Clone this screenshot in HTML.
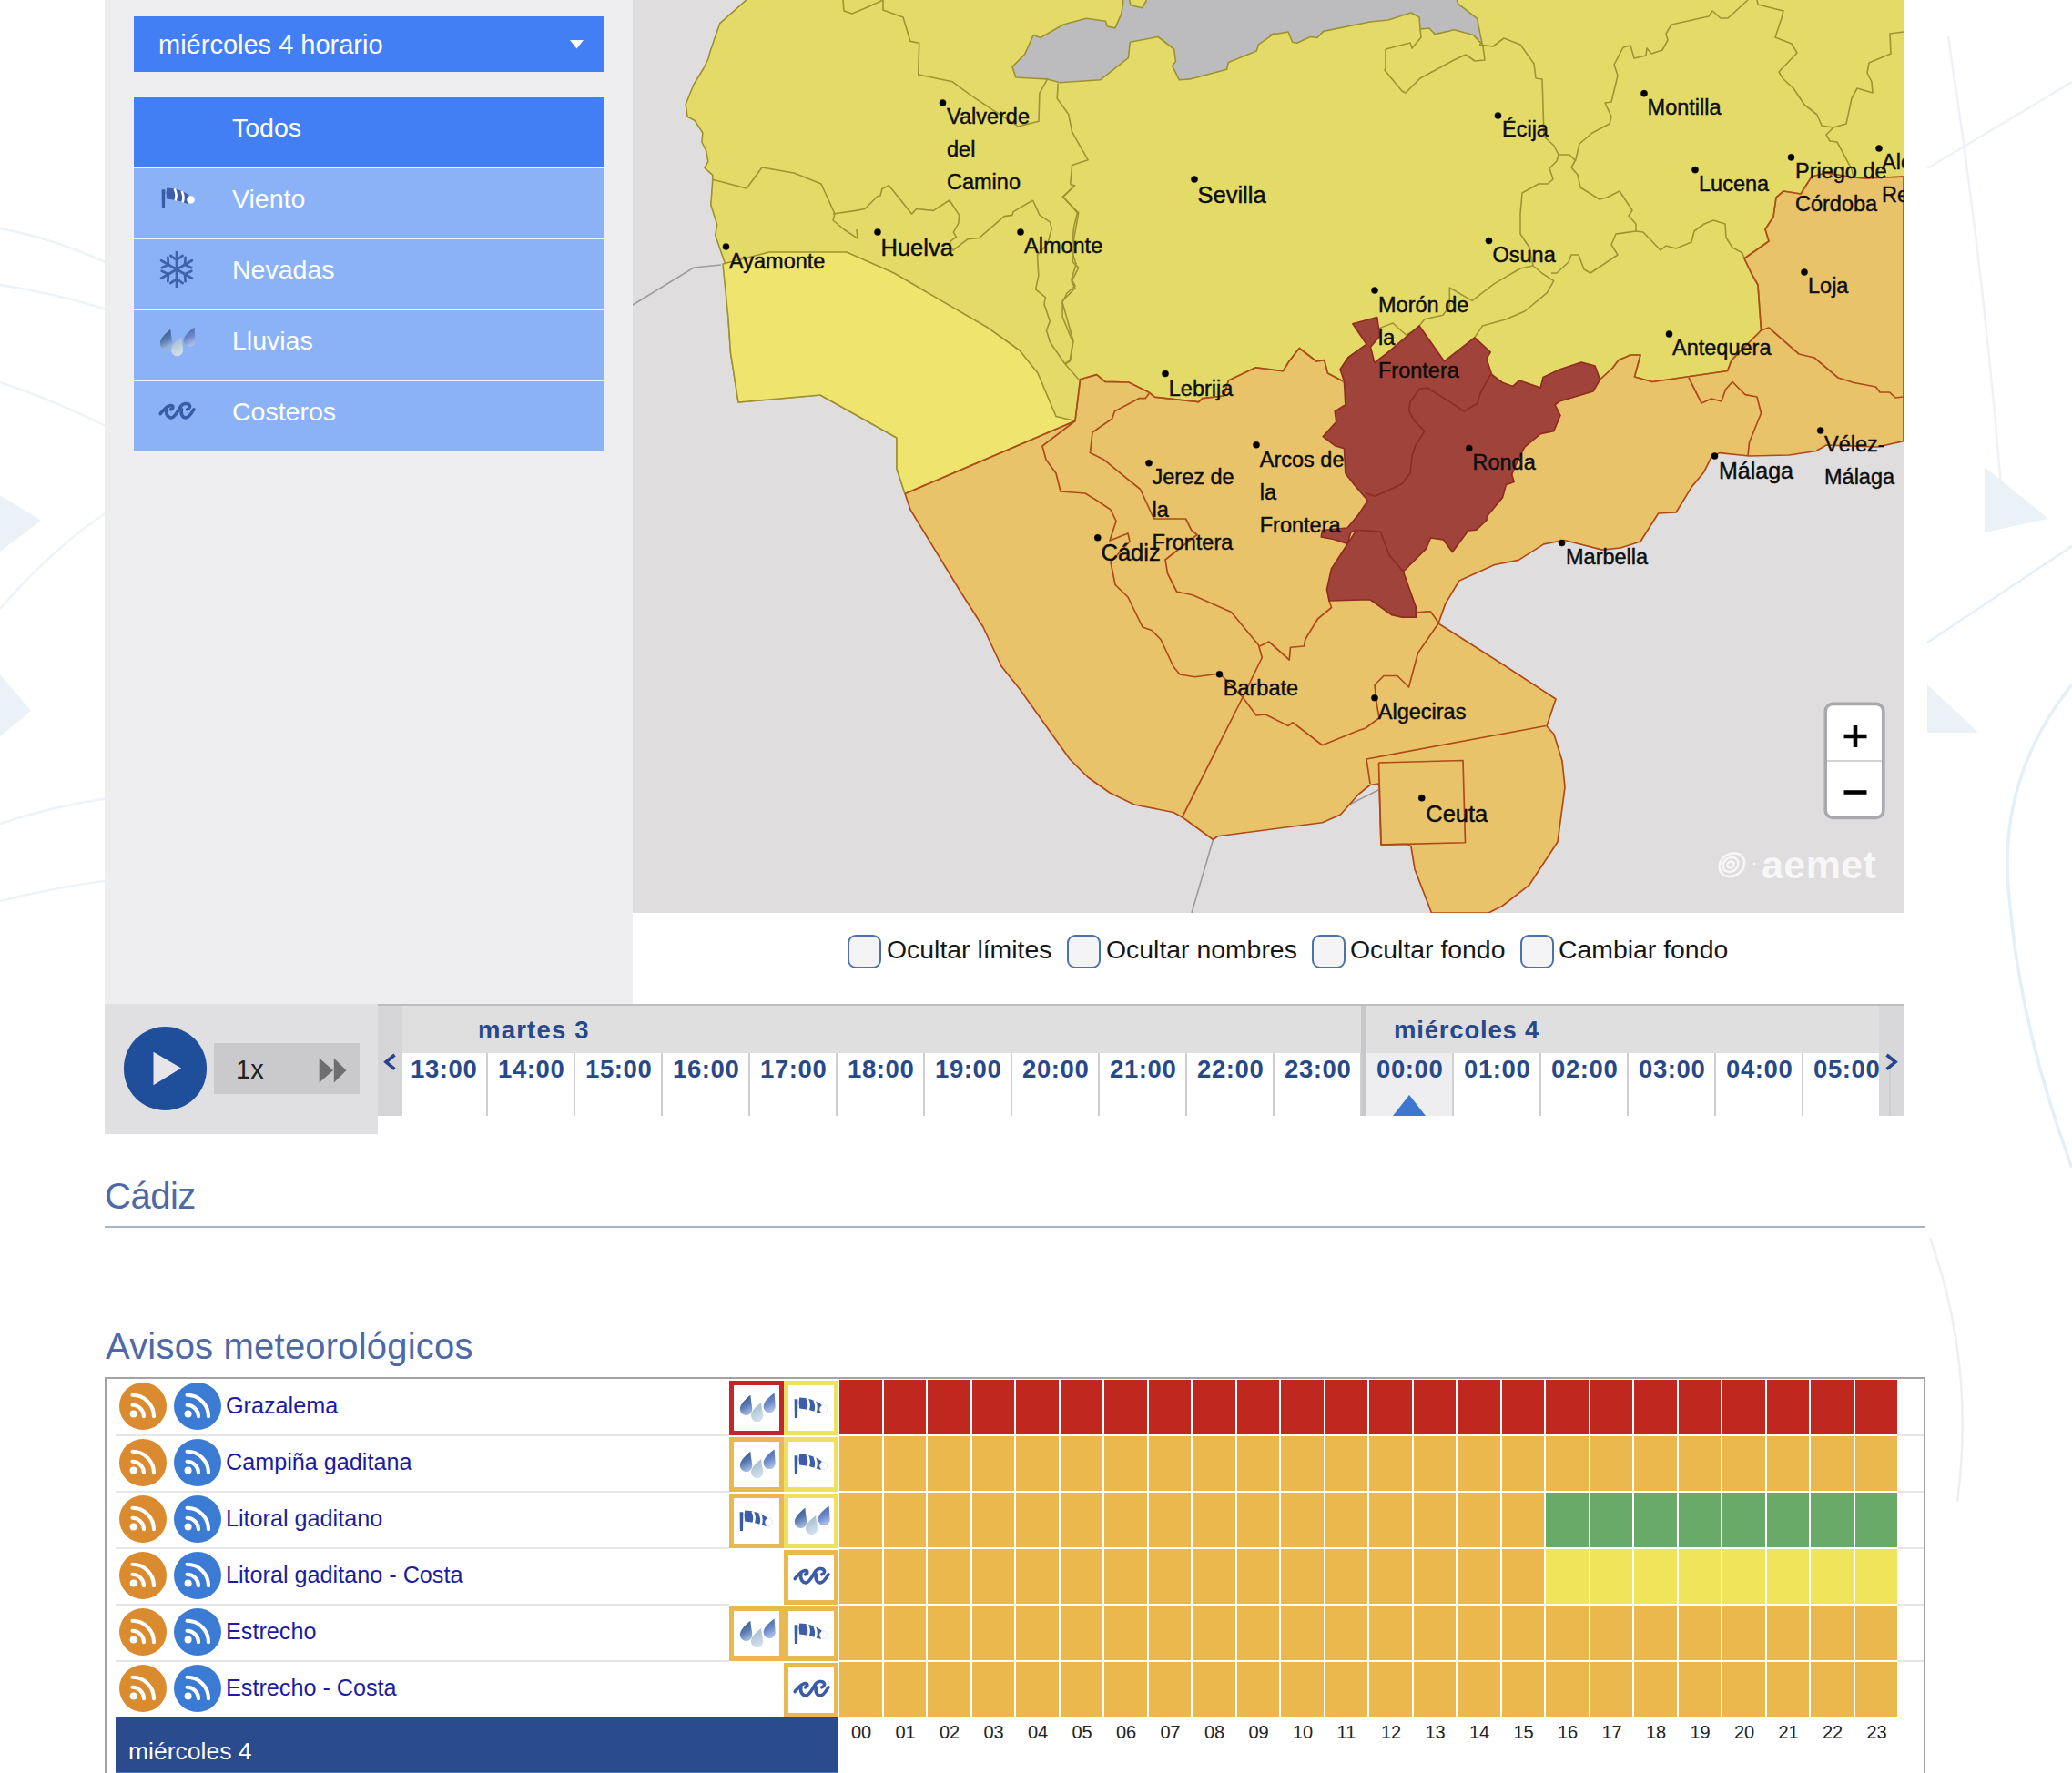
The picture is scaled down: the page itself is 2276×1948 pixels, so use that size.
<!DOCTYPE html>
<html><head><meta charset="utf-8">
<style>
*{box-sizing:border-box;margin:0;padding:0}
html,body{width:2276px;height:1948px;overflow:hidden;background:#fff;font-family:"Liberation Sans",sans-serif}
.a{position:absolute}
#side{left:115px;top:0;width:580px;height:1103px;background:#EEEEF0}
.dd{left:147px;top:18px;width:516px;height:61px;background:#427FF5;color:#fff;font-size:29px}
.mi{left:147px;width:516px;height:76px;background:#8BB2F7;color:#fff;font-size:28.5px}
.mi span{position:absolute;left:108px;top:17px}
#map{left:695px;top:0;width:1396px;height:1003px;background:#DFDDDE;overflow:hidden}
.cb{top:1027px;width:37px;height:37px;border:2.5px solid #4A72B0;border-radius:9px;background:#F4F4F6}
.cbt{top:1027px;font-size:28.4px;color:#161616}
.hr{top:1157px;width:96px;height:69px;border-right:2px solid #CFCFD1;}
.hr span{position:absolute;left:11px;top:2px;font-size:27.5px;font-weight:bold;color:#27498A;letter-spacing:0.6px}
.rss{width:52px;height:52px;border-radius:50%}
.nm{left:248px;font-size:25.2px;color:#1C1CA0}
.cell{width:46.5px;height:60px}
.hl{top:1891.5px;font-size:20px;color:#222}
</style></head><body>
<svg width="0" height="0" style="position:absolute">
<defs>
<linearGradient id="g1" x1="0" y1="0" x2="0.3" y2="1"><stop offset="0" stop-color="#2F4F8F"/><stop offset="0.6" stop-color="#5878B0"/><stop offset="1" stop-color="#9AB4D8"/></linearGradient>
<linearGradient id="g2" x1="0" y1="0" x2="0.3" y2="1"><stop offset="0" stop-color="#9EB4C8"/><stop offset="1" stop-color="#D0DEEA"/></linearGradient>
<linearGradient id="g3" x1="0" y1="0" x2="0.3" y2="1"><stop offset="0" stop-color="#3F5FA8"/><stop offset="0.6" stop-color="#6C88C8"/><stop offset="1" stop-color="#A8BCE8"/></linearGradient>
<symbol id="rain" viewBox="0 0 60 60">
<path d="M23.4,15.7 C17.26,20.479999999999997 11.565000000000001,26.509999999999998 11.900000000000002,31.2 A6.7,6.7 0 0 0 25.3,31.2 C24.965000000000003,25.84 24.0,23.74 23.4,15.7 Z" fill="url(#g1)"/>
<path d="M35.2,23.9 C29.28,28.04 23.67,33.980000000000004 24.0,38.6 A6.6,6.6 0 0 0 37.2,38.6 C36.870000000000005,33.32 35.800000000000004,31.819999999999997 35.2,23.9 Z" fill="url(#g2)"/>
<path d="M49.6,13.5 C42.900000000000006,18.200000000000003 37.375,24.05 37.7,28.6 A6.5,6.5 0 0 0 50.7,28.6 C50.375,23.400000000000002 50.2,21.3 49.6,13.5 Z" fill="url(#g3)"/>
</symbol>
<symbol id="wind" viewBox="0 0 60 60">
<path d="M11.6,20.2 L15.4,20.2 L15.0,41 L11.9,41 Z" fill="#3A5CA6"/>
<path d="M17.2,18.6 Q30,18.8 41.5,26.2 L40.5,36 Q28,31.5 17.2,30.6 Q15.8,24.5 17.2,18.6 Z" fill="#3D5DA8"/>
<path d="M25.6,19.4 Q29,26 26.6,32.4 M33.6,22 Q37,28.5 34.4,34.2" fill="none" stroke="#fff" stroke-width="2.6"/>
<circle cx="43.6" cy="31.4" r="4.2" fill="#fff" stroke="#D3DDF2" stroke-width="0.7"/>
</symbol>
<symbol id="wave" viewBox="0 0 60 60">
<g fill="none" stroke="#3A5CA6" stroke-width="3.6" stroke-linecap="round">
<path d="M12.2,31.6 C15.5,27.6 19,22.5 23.7,22.5 C26.5,22.5 26.5,25.7 23.7,26.8"/>
<path d="M18.9,26.8 C17.4,32.4 21.3,36.3 24.5,35.9 C28.4,35.5 31.2,28.4 35.1,22.9 C37.1,20.5 41.1,19.7 43.4,21.3 C45.4,22.9 44.6,26.1 41.8,26.8"/>
<path d="M35.5,26.8 C34,32.4 37.1,36.3 40.3,35.9 C44.2,35.5 46.2,30.8 49,26.8"/>
</g>
</symbol>
<symbol id="snow" viewBox="0 0 40 40"><g stroke="#3F62AC" stroke-width="2.7" stroke-linecap="round" fill="none"><path d="M20,20 L20.00,0.50 M20.00,9.60 L26.64,4.95 M20.00,9.60 L13.36,4.95 M20,20 L36.89,10.25 M29.01,14.80 L36.35,18.22 M29.01,14.80 L29.71,6.73 M20,20 L36.89,29.75 M29.01,25.20 L29.71,33.27 M29.01,25.20 L36.35,21.78 M20,20 L20.00,39.50 M20.00,30.40 L13.36,35.05 M20.00,30.40 L26.64,35.05 M20,20 L3.11,29.75 M10.99,25.20 L3.65,21.78 M10.99,25.20 L10.29,33.27 M20,20 L3.11,10.25 M10.99,14.80 L10.29,6.73 M10.99,14.80 L3.65,18.22"/></g></symbol>
<symbol id="rss" viewBox="0 0 52 52">
<circle cx="15.6" cy="34.6" r="4" fill="#fff"/>
<path d="M14.5,24.8 A12.5,12.5 0 0 1 27,37.3 M14.5,13.8 A23.5,23.5 0 0 1 38,37.3" fill="none" stroke="#fff" stroke-width="4.1" stroke-linecap="round"/>
</symbol>
</defs></svg>
<svg class="a" style="left:0;top:0" width="2276" height="1948">
<g fill="none" stroke="#EDF3F7" stroke-width="2.5">
<path d="M0,251 Q60,262 120,290"/>
<path d="M0,313 Q60,322 120,341"/>
<path d="M0,669 Q60,600 120,561"/>
<path d="M0,905 Q60,885 120,877"/>
<path d="M0,990 Q60,975 120,967"/>
<path d="M0,420 Q60,440 120,470"/>
<path d="M2276,752 Q2190,860 2208,995 Q2220,1131 2276,1283" stroke="#E3F0F5" stroke-width="3.5"/>
<path d="M2117,706 L2276,600" stroke="#E6EFF5"/>
<path d="M2117,185 L2276,90" stroke="#EEF2F6"/>
<path d="M2140,40 Q2180,300 2200,560" stroke="#EEF2F6"/>
<path d="M2120,1360 Q2170,1500 2150,1650" stroke="#EFEFF2"/>
</g>
<g fill="#EAF2F8">
<path d="M0,544 L45,572 L0,606 Z"/>
<path d="M0,741 L34,781 L0,809 Z"/>
<path d="M2117,752 L2173,805 L2117,805 Z"/>
<path d="M2180,513 L2250,570 L2180,585 Z" fill="#EAF1F7"/>
</g>
</svg>
<div class="a" style="left:115px;top:0;width:2001px;height:1948px;background:#fff"></div>
<div class="a" id="side"></div>
<div class="a dd"><span class="a" style="left:27px;top:15px">miércoles 4 horario</span>
<svg class="a" style="left:479px;top:26px" width="16" height="10"><path d="M0 0 L15 0 L7.5 9.5 Z" fill="#fff"/></svg></div>
<div class="a" style="left:145.5px;top:105px;width:518.5px;height:391.5px;background:#EAF4FF"></div>
<div class="a mi" style="top:107px;background:#427FF5"><span>Todos</span></div>
<div class="a mi" style="top:185px"><span>Viento</span></div>
<div class="a mi" style="top:263px"><span>Nevadas</span></div>
<div class="a mi" style="top:341px"><span>Lluvias</span></div>
<div class="a mi" style="top:419px"><span>Costeros</span></div>
<svg class="a" style="left:165.7px;top:187.8px" width="60" height="60"><use href="#wind"/></svg><svg class="a" style="left:174.4px;top:276px" width="40" height="40"><use href="#snow"/></svg><svg class="a" style="left:164px;top:345.5px" width="60" height="60"><use href="#rain"/></svg><svg class="a" style="left:163.8px;top:423.3px" width="60" height="60"><use href="#wave"/></svg>

<div class="a" id="map"><svg class="a" style="left:0;top:0" width="1396" height="1003" viewBox="695 0 1396 1003">
<rect x="695" y="0" width="1396" height="1003" fill="#DFDDDE"/>
<polyline points="695,335 762,294 792,291" fill="none" stroke="#9C9C9E" stroke-width="1.6"/>
<polyline points="1332.5,922.5 1309,1003" fill="none" stroke="#9C9C9E" stroke-width="1.6"/>
<polyline points="1515,867.5 1480,885" fill="none" stroke="#9C9C9E" stroke-width="1.6"/>
<polygon points="994,542 1000,560 1055,650 1080,689 1100,732 1120,757 1175,834 1195,854 1219,871 1246,884 1289,892.5 1300,898.75 1332.5,922.5 1337.5,918.75 1452.5,903.75 1472.5,895 1492.5,872.5 1505,862.5 1515,861 1517,928 1546,927.5 1550,930 1554,955 1572.5,1003 1635,1003 1650,995.5 1679.5,972.7 1711,925 1719,865 1716,836 1707,806.8 1699,797.7 1709,768 1650,729.5 1580,685 1587.8,663.1 1602.9,638 1641.8,620.5 1668.1,615.4 1695.7,597.9 1718.3,593.5 1760,604.1 1780,602 1802,595 1821.6,564 1841,563 1858.5,534.6 1871.5,519 1880,502 1889,497.6 1921.5,501 1965,500 1995,495.5 2006,489 2062.6,491 2091,484.6 2091,190 1900,190 1900,380 1180,380" fill="#E8C36A" stroke="#B04A18" stroke-width="1.7" stroke-linejoin="round"/>
<polygon points="822,-2 797.6,19.7 790.7,25.7 779.8,57.2 777.8,65 772.9,75 762,92.8 753.2,114.5 755.1,128.3 763,132.2 771.9,146 770.9,156 775.8,165.8 777.8,177.6 773.9,184.5 782.8,192.4 782.8,197.4 780.8,225 787.7,246.7 785.7,258.5 796.6,290 800,350 802.5,387.5 811,442 901,434 985,481 985,515 994,542.5 1181,462.5 1186.5,416.8 1204.7,411.6 1213.9,419.4 1239.9,420 1262.1,431.1 1268.6,436.3 1316.8,441.6 1320.7,437.6 1344.2,435 1349.4,418.1 1379.3,403.8 1409.3,407.7 1415.8,397.2 1427.2,382.5 1446.1,397 1454.7,395.6 1458.4,410 1475,418.7 1500,450 1650,450 1757.5,417 1771.6,404 1778,395.6 1791,390 1802,390 1795.5,414 1815,419.5 1897.6,407.5 1902,395.6 1934.5,363 1931,313 1923.6,300 1916,284 1943,265 1939,252 1948,238 1951,217 1959,210 1978,213 1990,194 2006,190 2036,195 2049,196 2069,195 2092,194 2092,-2" fill="#E4DA67" stroke="#9E9130" stroke-width="1.6" stroke-linejoin="round"/>
<polygon points="794,290 845,277 930,277 982,300 1085,360 1120,385 1140,410 1160,457.5 1181,462.5 994,542.5 985,515 985,481 901,434 811,442 802.5,387.5 800,350" fill="#EEE46E" stroke="#9E9130" stroke-width="1.6" stroke-linejoin="round"/>
<polygon points="1112,73.4 1115.8,85 1133.2,86 1150.6,86.9 1164,90.7 1208.5,87.8 1239.4,63.7 1241.3,46.3 1272.2,40.5 1289.6,54 1291.5,67.6 1287.6,72.4 1295.4,87.8 1307,86.9 1347.5,76.3 1349.4,68.5 1380.3,56 1382.2,49.2 1400,36.7 1394.8,38.6 1415,35 1419.6,46.3 1424.7,47.3 1439.2,40.5 1446.9,41.5 1453.7,34.4 1505,24 1525,22 1550,14 1559,19 1560,32 1570,31 1576.2,37.6 1597.4,32.8 1618.6,38.6 1628.3,49.2 1622.5,20.3 1601.4,3.9 1600,-2 1260.6,-2 1254.8,8.7 1242,5.8 1240.3,-2 1233.6,-2 1233.6,3.9 1231.7,15.4 1224.9,30.9 1216.2,29 1214.3,23.2 1193,20.3 1168,27 1142.9,41.5 1135.1,38.6 1125.5,59.8" fill="#BCBCBF" stroke="#9E9130" stroke-width="1.6" stroke-linejoin="round"/>
<polyline points="926,0 927,12 936,15 955,7 970,0" fill="none" stroke="#A09332" stroke-width="1.6" stroke-linejoin="round"/>
<polyline points="970,0 970,11 992,19 1000,45.4 1009.7,47.3 1008.7,82 1046.3,89.8 1065.6,104.2 1088.8,119.7 1115.8,137 1117.8,139 1141,133.2 1141.9,102.3 1150.6,86.9" fill="none" stroke="#A09332" stroke-width="1.6" stroke-linejoin="round"/>
<polyline points="1162.2,91.7 1161.2,108.1 1173.7,125.5 1177.6,144.8 1195,175.7 1177.6,181.5 1175.7,202.7 1180.5,203.7 1168,216.2 1183.4,233.6 1179.5,250 1177,275 1182,290 1177,307 1181,314 1172,322 1167,332 1179,375 1175,397 1170,400 1185,417" fill="none" stroke="#A09332" stroke-width="1.6" stroke-linejoin="round"/>
<polyline points="1134.5,220 1142,236.4 1153.3,243.9 1155.2,251.4 1150.8,267.8 1139.5,280.3 1140.8,302.9 1137.6,317.9 1148.3,326.7 1147,334.3 1153.3,353.1 1149.5,363.1 1153.3,375.7 1169.6,399.5 1175.9,395.7 1178.4,375.7 1167.1,348.1 1167.1,330.5 1180.9,316.7 1177.1,309.2 1184.7,294.1 1178.4,287.8 1179.6,262.7 1184.7,233.9 1167.1,216.3 1180.9,203.8" fill="none" stroke="#A09332" stroke-width="1.6" stroke-linejoin="round"/>
<polyline points="1046.6,275.3 1063,262.7 1075.5,261.5 1103.1,237.6 1111.9,236.4 1113.1,232.6 1134.5,220" fill="none" stroke="#A09332" stroke-width="1.6" stroke-linejoin="round"/>
<polyline points="915,235 940,231.4 950,229.5 963.8,215.7 967,215 968.9,207.5 976.4,203.8 1001.5,235.1 1006.5,229.5 1025.3,231.4 1042.9,220 1053.6,236.4 1052.9,245.2 1047.3,255.2 1050.4,260.2 1044.1,265.2 1042.9,270.3 1046.6,274 1046.6,275.3" fill="none" stroke="#A09332" stroke-width="1.6" stroke-linejoin="round"/>
<polyline points="782,197 820,207 829,195 837,184 872,190 902,202 917,235 915,242 927,252 942,262 941,252" fill="none" stroke="#A09332" stroke-width="1.6" stroke-linejoin="round"/>
<polyline points="1522,54 1549,47 1551,53 1561,41 1560,32" fill="none" stroke="#A09332" stroke-width="1.6" stroke-linejoin="round"/>
<polyline points="1522,54 1522,75 1521,77 1540,100 1544,102 1560,86 1597,66 1610,60 1620,67 1631,66 1629,51 1625,49" fill="none" stroke="#A09332" stroke-width="1.6" stroke-linejoin="round"/>
<polyline points="1625,49 1640,51 1652,42 1670,49 1685,70 1687,86 1694,87 1695,117 1696,150 1707,160 1712,170 1710,177 1702,185 1706,197 1700,202 1690,202 1672,212 1670,235 1670,257 1680,272 1684,292 1670,295 1641.5,311.6 1617,330.4 1592.3,316 1592.3,336.2 1585,346.3 1564.8,350.7 1559,357.9" fill="none" stroke="#A09332" stroke-width="1.6" stroke-linejoin="round"/>
<polyline points="1514,361 1530,355 1544.5,368 1552,364" fill="none" stroke="#A09332" stroke-width="1.6" stroke-linejoin="round"/>
<polyline points="1684,292 1693.6,300 1706.7,308.7 1699.4,321.7 1674.8,342 1654.5,350.7 1628.5,357.9 1619.8,370.9" fill="none" stroke="#A09332" stroke-width="1.6" stroke-linejoin="round"/>
<polyline points="1920,0 1898,20 1890,20 1881,12 1877,18 1836,27 1830,37 1832,44 1826,55 1814,59 1809,53 1808,61 1795,64 1791,50 1783,52 1773,71 1777,83 1770,112 1763,113 1770,128 1768,136 1749,146 1735,158 1731,175 1726,184 1733,192 1736,206 1757,219 1765,217 1779,210 1793,231 1789,237 1797,246 1797,254 1805,255 1824,275 1830,270 1841,273 1858,266 1861,254 1872,246 1882,242 1895,246 1896,261 1903,272 1914,278 1916,284" fill="none" stroke="#A09332" stroke-width="1.6" stroke-linejoin="round"/>
<polyline points="1712,170 1724,170 1731,177" fill="none" stroke="#A09332" stroke-width="1.6" stroke-linejoin="round"/>
<polyline points="1797,254 1775,257 1770,269 1777,280 1747,300 1740,296 1734,280 1726,280 1723,288 1710,300 1704,300" fill="none" stroke="#A09332" stroke-width="1.6" stroke-linejoin="round"/>
<polyline points="1930,0 1931,5 1959,12 1957,20 1950,41 1968,48 1974,58 1954,79 1959,87 1970,97 1982,115 1996,126 2001,138 2014,140 2028,136 2034,108 2040,97 2057,102 2056,90 2051,80 2053,69 2077,59 2076,37 2091,35" fill="none" stroke="#A09332" stroke-width="1.6" stroke-linejoin="round"/>
<polyline points="2014,140 2006,148 2010,155 2018,156 2034,186 2036,195" fill="none" stroke="#A09332" stroke-width="1.6" stroke-linejoin="round"/>
<polyline points="1181,462.5 1145,490 1149,505 1160,520 1165,540 1192,542 1205,550 1220,560 1226,572.5 1219,594 1239,586 1241,595 1220,617.5 1225,642.5 1239,656 1255,689 1265,692.5 1275,702.5 1289,732.5 1296,741 1312.5,743.75 1340,740 1365,766" fill="none" stroke="#B04A18" stroke-width="1.7" stroke-linejoin="round"/>
<polyline points="1262.1,432.4 1258.2,437.6 1251.6,437.6 1224.3,452 1221.7,460 1200,475 1197.5,497.5 1212.5,505 1240,527.5 1252.5,537.5 1267.5,570 1287.5,570 1302.5,570 1308.75,582.5 1315,587.5 1280,615 1282.5,630 1292.5,650 1310,653.75 1352.5,672.5 1382.5,708.75 1386.25,722.5 1365,766.25 1298.75,897.5" fill="none" stroke="#B04A18" stroke-width="1.7" stroke-linejoin="round"/>
<polyline points="1365,766 1380,786 1390,785 1415,797.5 1420,793.75 1452.5,818.75 1492.5,802.5 1500,800 1515,788.75 1512.5,775 1510,752.5 1520,742.5 1535,742.5 1547.5,755 1557.5,717.5 1580,685" fill="none" stroke="#B04A18" stroke-width="1.7" stroke-linejoin="round"/>
<polyline points="1383.75,710 1393.75,705 1416.25,725 1417.5,711.25 1432.5,710 1433.75,702.5 1447.5,680 1462.5,667.5 1460,660" fill="none" stroke="#B04A18" stroke-width="1.7" stroke-linejoin="round"/>
<polyline points="1555.2,673.1 1567.8,671.9 1571.5,671.9 1580.3,684.4" fill="none" stroke="#B04A18" stroke-width="1.7" stroke-linejoin="round"/>
<polyline points="1501,834 1698,797.5" fill="none" stroke="#B04A18" stroke-width="1.7" stroke-linejoin="round"/>
<polyline points="1501,834 1505,861" fill="none" stroke="#B04A18" stroke-width="1.7" stroke-linejoin="round"/>
<polyline points="1514.5,838 1607,835.5 1609.5,925.75 1517,928 1514.5,838" fill="none" stroke="#B04A18" stroke-width="1.7" stroke-linejoin="round"/>
<polyline points="1855,415 1869,443 1880,438 1891,441 1895.4,428 1903,419.5 1917,433.6 1930,436 1934.5,454 1921.5,486 1920,501" fill="none" stroke="#B04A18" stroke-width="1.7" stroke-linejoin="round"/>
<polyline points="1934.5,363 1943,360 1976,389 1993,393 2019,415 2036.6,420.5 2060.5,425 2065,431 2075.7,431 2082,437 2091,436" fill="none" stroke="#B04A18" stroke-width="1.7" stroke-linejoin="round"/>
<polyline points="994,542.5 1181,462.5" fill="none" stroke="#B04A18" stroke-width="1.7" stroke-linejoin="round"/>
<polyline points="1475,418.7 1458.4,410 1454.7,395.6 1446.1,397 1427.2,382.5 1415.8,397.2 1409.3,407.7 1379.3,403.8 1349.4,418.1 1344.2,435 1320.7,437.6 1316.8,441.6 1268.6,436.3 1262.1,431.1 1239.9,420 1213.9,419.4 1204.7,411.6 1186.5,416.8 1181,462.5" fill="none" stroke="#B04A18" stroke-width="1.7" stroke-linejoin="round"/>
<polyline points="1757.5,417 1771.6,404 1778,395.6 1791,390 1802,390 1795.5,414 1815,419.5 1897.6,407.5 1902,395.6 1934.5,363 1931,313 1923.6,300 1916,284 1943,265 1939,252 1948,238 1951,217 1959,210 1978,213 1990,194 2006,190 2036,195 2049,196 2069,195 2092,194" fill="none" stroke="#B04A18" stroke-width="1.7" stroke-linejoin="round"/>
<polygon points="1472.1,405.7 1480.8,392.7 1501.1,378.2 1485.9,355.7 1512.7,348.5 1515.6,369.5 1505.4,381.1 1509.8,398.5 1521.3,389.8 1559,357.9 1586.5,397 1619.8,370.9 1637.2,386.9 1632.8,394.1 1638.6,411.5 1650.2,420.2 1661.8,424.5 1669,418 1692.2,426 1695.1,414.4 1713,406 1737,398 1752,402 1757.5,417 1750,430 1713,441 1708.1,444.8 1713.9,456.4 1706.7,473.7 1692.2,476.6 1674.8,491.1 1670,500 1660.6,521.3 1663.1,529.5 1654.3,532.6 1650.6,546.4 1633,567.8 1633,571.5 1621.7,582.2 1612.9,582.8 1595.4,606.6 1585.3,592.8 1571.5,591 1566.5,602.9 1541.4,628 1555.2,666.9 1555.2,678.2 1540.2,678.2 1528.9,675.7 1505,658.75 1460,660 1457.5,647.5 1462.5,625 1490,582.5 1483.75,585 1480,597.5 1465,592.5 1451.25,590 1452.5,582.5 1480,580 1492.5,565 1502.5,550 1487.5,532.5 1477.9,519.9 1476.5,492.6 1466.3,489.7 1453.3,479.5 1467.8,463.6 1466.3,452 1477.9,444.8 1476.5,418.7" fill="#A0443B" stroke="#8E2C20" stroke-width="1.7" stroke-linejoin="round"/>
<polyline points="1637.2,411.5 1625.6,433.2 1622.7,443.3 1608.2,452 1590.8,440.4 1567.7,426 1559,427.4 1548.9,441.9 1547.4,450.6 1553.2,462.2 1564.8,473.7 1554.6,490 1551.4,500 1548.9,520 1540.2,531.4 1527.6,537.6 1510,545.2 1500,541.4" fill="none" stroke="#8E2C20" stroke-width="1.7" stroke-linejoin="round"/>
<polyline points="1490,582.5 1500,582.8 1516.3,584 1526.3,610.4 1541.4,628" fill="none" stroke="#8E2C20" stroke-width="1.7" stroke-linejoin="round"/>
<g font-family="Liberation Sans, sans-serif" fill="#0E0E0E" stroke="#0E0E0E" stroke-width="0.45">
<circle cx="797.5" cy="271" r="3.6" fill="#000"/>
<text x="801" y="295" font-size="23.5">Ayamonte</text>
<circle cx="964" cy="255" r="3.6" fill="#000"/>
<text x="967.5" y="281" font-size="25.5">Huelva</text>
<circle cx="1035.5" cy="113" r="3.6" fill="#000"/>
<text x="1040" y="136" font-size="23.5">Valverde</text>
<text x="1040" y="172" font-size="23.5">del</text>
<text x="1040" y="208" font-size="23.5">Camino</text>
<circle cx="1121" cy="255" r="3.6" fill="#000"/>
<text x="1125" y="278" font-size="23.5">Almonte</text>
<circle cx="1312" cy="197" r="3.6" fill="#000"/>
<text x="1315.5" y="222.5" font-size="25.5">Sevilla</text>
<circle cx="1645.5" cy="127" r="3.6" fill="#000"/>
<text x="1650" y="150" font-size="23.5">Écija</text>
<circle cx="1635.5" cy="264.5" r="3.6" fill="#000"/>
<text x="1639.5" y="288" font-size="23.5">Osuna</text>
<circle cx="1510" cy="319" r="3.6" fill="#000"/>
<text x="1514" y="342.5" font-size="23.5">Morón de</text>
<text x="1514" y="378.5" font-size="23.5">la</text>
<text x="1514" y="414.5" font-size="23.5">Frontera</text>
<circle cx="1806" cy="102.7" r="3.6" fill="#000"/>
<text x="1809.6" y="126.4" font-size="23.5">Montilla</text>
<circle cx="1862" cy="186.6" r="3.6" fill="#000"/>
<text x="1866" y="210" font-size="23.5">Lucena</text>
<circle cx="1967.5" cy="172.8" r="3.6" fill="#000"/>
<text x="1972" y="195.5" font-size="23.5">Priego de</text>
<text x="1972" y="231.5" font-size="23.5">Córdoba</text>
<circle cx="2064" cy="163" r="3.6" fill="#000"/>
<text x="2067" y="185.6" font-size="23.5">Alcalá la</text>
<text x="2067" y="221.6" font-size="23.5">Real</text>
<circle cx="1982" cy="299" r="3.6" fill="#000"/>
<text x="1986" y="322" font-size="23.5">Loja</text>
<circle cx="1833.5" cy="367" r="3.6" fill="#000"/>
<text x="1837" y="390" font-size="23.5">Antequera</text>
<circle cx="1280" cy="410.5" r="3.6" fill="#000"/>
<text x="1283.75" y="434.5" font-size="23.5">Lebrija</text>
<circle cx="1262" cy="508.75" r="3.6" fill="#000"/>
<text x="1265.5" y="532" font-size="23.5">Jerez de</text>
<text x="1265.5" y="568" font-size="23.5">la</text>
<text x="1265.5" y="604" font-size="23.5">Frontera</text>
<circle cx="1380" cy="488.75" r="3.6" fill="#000"/>
<text x="1383.75" y="512.5" font-size="23.5">Arcos de</text>
<text x="1383.75" y="548.5" font-size="23.5">la</text>
<text x="1383.75" y="584.5" font-size="23.5">Frontera</text>
<circle cx="1613.75" cy="492.5" r="3.6" fill="#000"/>
<text x="1617.5" y="516" font-size="23.5">Ronda</text>
<circle cx="1205.75" cy="590.75" r="3.6" fill="#000"/>
<text x="1209.5" y="615.5" font-size="25.5">Cádiz</text>
<circle cx="1883.5" cy="501" r="3.6" fill="#000"/>
<text x="1888" y="526" font-size="25">Málaga</text>
<circle cx="1999.7" cy="473" r="3.6" fill="#000"/>
<text x="2004" y="495.5" font-size="23.5">Vélez-</text>
<text x="2004" y="531.5" font-size="23.5">Málaga</text>
<circle cx="1715.6" cy="596.5" r="3.6" fill="#000"/>
<text x="1720" y="620" font-size="23.5">Marbella</text>
<circle cx="1339.5" cy="740.75" r="3.6" fill="#000"/>
<text x="1343.75" y="763.75" font-size="23.5">Barbate</text>
<circle cx="1510" cy="766.75" r="3.6" fill="#000"/>
<text x="1513.75" y="790" font-size="23.5">Algeciras</text>
<circle cx="1561.75" cy="876.75" r="3.6" fill="#000"/>
<text x="1566.25" y="902.5" font-size="25.5">Ceuta</text>
</g>
<rect x="2005.2" y="773.4" width="63.6" height="125" rx="8" fill="#fff" stroke="#A9A9AD" stroke-width="3.6"/>
<line x1="2007" y1="836" x2="2067" y2="836" stroke="#C4C4C6" stroke-width="1.4"/>
<path d="M2025.5,809 H2050.5 M2038,797 V821" stroke="#000" stroke-width="4.6"/>
<path d="M2025.5,870.5 H2050.5" stroke="#000" stroke-width="4.6"/>
<g opacity="0.92" fill="#FAFAFB">
<text x="1935" y="965" font-size="43" font-weight="bold" letter-spacing="0.4" font-family="Liberation Sans, sans-serif">aemet</text>
<g fill="none" stroke="#FAFAFB" stroke-width="2.6" transform="rotate(-35 1901 950)"><ellipse cx="1901" cy="950" rx="4" ry="3.2"/><ellipse cx="1901" cy="950" rx="9" ry="7.5"/><ellipse cx="1902" cy="951" rx="14.5" ry="12"/></g>
<circle cx="1927" cy="949" r="1.6"/>
</g>
</svg></div>

<div class="a cb" style="left:931px"></div><div class="a cbt" style="left:974px">Ocultar límites</div>
<div class="a cb" style="left:1172px"></div><div class="a cbt" style="left:1215px">Ocultar nombres</div>
<div class="a cb" style="left:1441px"></div><div class="a cbt" style="left:1483px">Ocultar fondo</div>
<div class="a cb" style="left:1670px"></div><div class="a cbt" style="left:1712px">Cambiar fondo</div>

<!-- timeline -->
<div class="a" style="left:115px;top:1103px;width:300px;height:143px;background:#E0DFE1"></div>
<div class="a" style="left:135.8px;top:1128.3px;width:91.5px;height:91.5px;border-radius:50%;background:#1F4F9A"></div>
<svg class="a" style="left:168px;top:1155px" width="36" height="40"><path d="M0.5 0.8 L31 18.5 L0.5 37.3 Z" fill="#E6E6EA"/></svg>
<div class="a" style="left:235px;top:1146px;width:160px;height:56px;background:#CACACC"></div>
<div class="a" style="left:259px;top:1159px;font-size:29px;color:#222">1x</div>
<svg class="a" style="left:350px;top:1162px" width="32" height="30"><path d="M0.7 0.6 L16 14 L0.7 27.6 Z M16.8 0.6 L30.4 14 L16.8 27.6 Z" fill="#6E6E70"/></svg>
<div class="a" style="left:415px;top:1103px;width:1676px;height:2px;background:#BDBDBF"></div>
<div class="a" style="left:415px;top:1105px;width:27px;height:121px;background:#D5D5D7"></div>
<div class="a" style="left:442px;top:1105px;width:1622px;height:52px;background:#E0DFE0"></div>
<div class="a" style="left:2064px;top:1105px;width:27px;height:121px;background:#D8D8DA"></div>
<div class="a" style="left:525px;top:1116px;font-size:27.5px;font-weight:bold;color:#27498A;letter-spacing:1.2px">martes 3</div>
<div class="a" style="left:1531px;top:1116px;font-size:27.5px;font-weight:bold;color:#27498A;letter-spacing:0.8px">miércoles 4</div>
<div class="a" style="left:1495px;top:1105px;width:6px;height:121px;background:#C8C8CA"></div>
<div class="a" style="left:1501px;top:1157px;width:95px;height:69px;background:#EEEDEF"></div>
<svg class="a" style="left:1528px;top:1202px" width="40" height="24"><path d="M2 24 L20 1 L38 24 Z" fill="#3D77D0"/></svg>


<div class="a hr" style="left:440px"><span>13:00</span></div>
<div class="a hr" style="left:536px"><span>14:00</span></div>
<div class="a hr" style="left:632px"><span>15:00</span></div>
<div class="a hr" style="left:728px"><span>16:00</span></div>
<div class="a hr" style="left:824px"><span>17:00</span></div>
<div class="a hr" style="left:920px"><span>18:00</span></div>
<div class="a hr" style="left:1016px"><span>19:00</span></div>
<div class="a hr" style="left:1112px"><span>20:00</span></div>
<div class="a hr" style="left:1208px"><span>21:00</span></div>
<div class="a hr" style="left:1304px"><span>22:00</span></div>
<div class="a hr" style="left:1400px"><span>23:00</span></div>
<div class="a hr" style="left:1501px"><span>00:00</span></div>
<div class="a hr" style="left:1597px"><span>01:00</span></div>
<div class="a hr" style="left:1693px"><span>02:00</span></div>
<div class="a hr" style="left:1789px"><span>03:00</span></div>
<div class="a hr" style="left:1885px"><span>04:00</span></div>
<div class="a hr" style="left:1981px"><span>05:00</span></div>
<svg class="a" style="left:0;top:0;overflow:visible" width="1" height="1"><path d="M433.5,1159 L424,1166.8 L433.5,1174.6" fill="none" stroke="#29438C" stroke-width="3.6"/><path d="M2072.5,1159 L2082,1166.8 L2072.5,1174.6" fill="none" stroke="#29438C" stroke-width="3.6"/></svg>

<!-- headings -->
<div class="a" style="left:115px;top:1292px;font-size:40px;color:#4E68A8;letter-spacing:-0.5px">Cádiz</div>
<div class="a" style="left:115px;top:1347px;width:2000px;height:1.8px;background:#A9B5C6"></div>
<div class="a" style="left:116px;top:1457px;font-size:40px;color:#4E68A8;letter-spacing:0.2px">Avisos meteorológicos</div>

<!-- table -->
<div class="a" style="left:115px;top:1513px;width:2000px;height:440px;border:2px solid #A3A3A3;background:#fff"></div>
<div class="a rss" style="left:131px;top:1519px;background:#DB8B2F"></div>
<svg class="a" style="left:131px;top:1519px" width="52" height="52"><use href="#rss"/></svg>
<div class="a rss" style="left:191px;top:1519px;background:#3B7BD3"></div>
<svg class="a" style="left:191px;top:1519px" width="52" height="52"><use href="#rss"/></svg>
<div class="a nm" style="top:1530px">Grazalema</div>
<div class="a" style="left:801px;top:1517px;width:60px;height:60px;border:5.5px solid #C0282A;background:#fff"></div>
<svg class="a" style="left:801px;top:1517px" width="60" height="60"><use href="#rain"/></svg>
<div class="a" style="left:861px;top:1517px;width:60px;height:60px;border:5.5px solid #EDE160;background:#fff"></div>
<svg class="a" style="left:861px;top:1517px" width="60" height="60"><use href="#wind"/></svg>
<div class="a cell" style="left:922.0px;top:1516px;background:#C0271F"></div>
<div class="a cell" style="left:970.5px;top:1516px;background:#C0271F"></div>
<div class="a cell" style="left:1019.0px;top:1516px;background:#C0271F"></div>
<div class="a cell" style="left:1067.5px;top:1516px;background:#C0271F"></div>
<div class="a cell" style="left:1116.0px;top:1516px;background:#C0271F"></div>
<div class="a cell" style="left:1164.5px;top:1516px;background:#C0271F"></div>
<div class="a cell" style="left:1213.0px;top:1516px;background:#C0271F"></div>
<div class="a cell" style="left:1261.5px;top:1516px;background:#C0271F"></div>
<div class="a cell" style="left:1310.0px;top:1516px;background:#C0271F"></div>
<div class="a cell" style="left:1358.5px;top:1516px;background:#C0271F"></div>
<div class="a cell" style="left:1407.0px;top:1516px;background:#C0271F"></div>
<div class="a cell" style="left:1455.5px;top:1516px;background:#C0271F"></div>
<div class="a cell" style="left:1504.0px;top:1516px;background:#C0271F"></div>
<div class="a cell" style="left:1552.5px;top:1516px;background:#C0271F"></div>
<div class="a cell" style="left:1601.0px;top:1516px;background:#C0271F"></div>
<div class="a cell" style="left:1649.5px;top:1516px;background:#C0271F"></div>
<div class="a cell" style="left:1698.0px;top:1516px;background:#C0271F"></div>
<div class="a cell" style="left:1746.5px;top:1516px;background:#C0271F"></div>
<div class="a cell" style="left:1795.0px;top:1516px;background:#C0271F"></div>
<div class="a cell" style="left:1843.5px;top:1516px;background:#C0271F"></div>
<div class="a cell" style="left:1892.0px;top:1516px;background:#C0271F"></div>
<div class="a cell" style="left:1940.5px;top:1516px;background:#C0271F"></div>
<div class="a cell" style="left:1989.0px;top:1516px;background:#C0271F"></div>
<div class="a cell" style="left:2037.5px;top:1516px;background:#C0271F"></div>
<div class="a" style="left:127px;top:1576px;width:674px;height:2px;background:#E6E6E6"></div>
<div class="a" style="left:2084px;top:1576px;width:29px;height:2px;background:#E6E6E6"></div>
<div class="a rss" style="left:131px;top:1581px;background:#DB8B2F"></div>
<svg class="a" style="left:131px;top:1581px" width="52" height="52"><use href="#rss"/></svg>
<div class="a rss" style="left:191px;top:1581px;background:#3B7BD3"></div>
<svg class="a" style="left:191px;top:1581px" width="52" height="52"><use href="#rss"/></svg>
<div class="a nm" style="top:1592px">Campiña gaditana</div>
<div class="a" style="left:801px;top:1579px;width:60px;height:60px;border:5.5px solid #EAB850;background:#fff"></div>
<svg class="a" style="left:801px;top:1579px" width="60" height="60"><use href="#rain"/></svg>
<div class="a" style="left:861px;top:1579px;width:60px;height:60px;border:5.5px solid #EDE160;background:#fff"></div>
<svg class="a" style="left:861px;top:1579px" width="60" height="60"><use href="#wind"/></svg>
<div class="a cell" style="left:922.0px;top:1578px;background:#EBB84E"></div>
<div class="a cell" style="left:970.5px;top:1578px;background:#EBB84E"></div>
<div class="a cell" style="left:1019.0px;top:1578px;background:#EBB84E"></div>
<div class="a cell" style="left:1067.5px;top:1578px;background:#EBB84E"></div>
<div class="a cell" style="left:1116.0px;top:1578px;background:#EBB84E"></div>
<div class="a cell" style="left:1164.5px;top:1578px;background:#EBB84E"></div>
<div class="a cell" style="left:1213.0px;top:1578px;background:#EBB84E"></div>
<div class="a cell" style="left:1261.5px;top:1578px;background:#EBB84E"></div>
<div class="a cell" style="left:1310.0px;top:1578px;background:#EBB84E"></div>
<div class="a cell" style="left:1358.5px;top:1578px;background:#EBB84E"></div>
<div class="a cell" style="left:1407.0px;top:1578px;background:#EBB84E"></div>
<div class="a cell" style="left:1455.5px;top:1578px;background:#EBB84E"></div>
<div class="a cell" style="left:1504.0px;top:1578px;background:#EBB84E"></div>
<div class="a cell" style="left:1552.5px;top:1578px;background:#EBB84E"></div>
<div class="a cell" style="left:1601.0px;top:1578px;background:#EBB84E"></div>
<div class="a cell" style="left:1649.5px;top:1578px;background:#EBB84E"></div>
<div class="a cell" style="left:1698.0px;top:1578px;background:#EBB84E"></div>
<div class="a cell" style="left:1746.5px;top:1578px;background:#EBB84E"></div>
<div class="a cell" style="left:1795.0px;top:1578px;background:#EBB84E"></div>
<div class="a cell" style="left:1843.5px;top:1578px;background:#EBB84E"></div>
<div class="a cell" style="left:1892.0px;top:1578px;background:#EBB84E"></div>
<div class="a cell" style="left:1940.5px;top:1578px;background:#EBB84E"></div>
<div class="a cell" style="left:1989.0px;top:1578px;background:#EBB84E"></div>
<div class="a cell" style="left:2037.5px;top:1578px;background:#EBB84E"></div>
<div class="a" style="left:127px;top:1638px;width:674px;height:2px;background:#E6E6E6"></div>
<div class="a" style="left:2084px;top:1638px;width:29px;height:2px;background:#E6E6E6"></div>
<div class="a rss" style="left:131px;top:1643px;background:#DB8B2F"></div>
<svg class="a" style="left:131px;top:1643px" width="52" height="52"><use href="#rss"/></svg>
<div class="a rss" style="left:191px;top:1643px;background:#3B7BD3"></div>
<svg class="a" style="left:191px;top:1643px" width="52" height="52"><use href="#rss"/></svg>
<div class="a nm" style="top:1654px">Litoral gaditano</div>
<div class="a" style="left:801px;top:1641px;width:60px;height:60px;border:5.5px solid #EAB850;background:#fff"></div>
<svg class="a" style="left:801px;top:1641px" width="60" height="60"><use href="#wind"/></svg>
<div class="a" style="left:861px;top:1641px;width:60px;height:60px;border:5.5px solid #EDE160;background:#fff"></div>
<svg class="a" style="left:861px;top:1641px" width="60" height="60"><use href="#rain"/></svg>
<div class="a cell" style="left:922.0px;top:1640px;background:#EBB84E"></div>
<div class="a cell" style="left:970.5px;top:1640px;background:#EBB84E"></div>
<div class="a cell" style="left:1019.0px;top:1640px;background:#EBB84E"></div>
<div class="a cell" style="left:1067.5px;top:1640px;background:#EBB84E"></div>
<div class="a cell" style="left:1116.0px;top:1640px;background:#EBB84E"></div>
<div class="a cell" style="left:1164.5px;top:1640px;background:#EBB84E"></div>
<div class="a cell" style="left:1213.0px;top:1640px;background:#EBB84E"></div>
<div class="a cell" style="left:1261.5px;top:1640px;background:#EBB84E"></div>
<div class="a cell" style="left:1310.0px;top:1640px;background:#EBB84E"></div>
<div class="a cell" style="left:1358.5px;top:1640px;background:#EBB84E"></div>
<div class="a cell" style="left:1407.0px;top:1640px;background:#EBB84E"></div>
<div class="a cell" style="left:1455.5px;top:1640px;background:#EBB84E"></div>
<div class="a cell" style="left:1504.0px;top:1640px;background:#EBB84E"></div>
<div class="a cell" style="left:1552.5px;top:1640px;background:#EBB84E"></div>
<div class="a cell" style="left:1601.0px;top:1640px;background:#EBB84E"></div>
<div class="a cell" style="left:1649.5px;top:1640px;background:#EBB84E"></div>
<div class="a cell" style="left:1698.0px;top:1640px;background:#6AAA68"></div>
<div class="a cell" style="left:1746.5px;top:1640px;background:#6AAA68"></div>
<div class="a cell" style="left:1795.0px;top:1640px;background:#6AAA68"></div>
<div class="a cell" style="left:1843.5px;top:1640px;background:#6AAA68"></div>
<div class="a cell" style="left:1892.0px;top:1640px;background:#6AAA68"></div>
<div class="a cell" style="left:1940.5px;top:1640px;background:#6AAA68"></div>
<div class="a cell" style="left:1989.0px;top:1640px;background:#6AAA68"></div>
<div class="a cell" style="left:2037.5px;top:1640px;background:#6AAA68"></div>
<div class="a" style="left:127px;top:1700px;width:674px;height:2px;background:#E6E6E6"></div>
<div class="a" style="left:2084px;top:1700px;width:29px;height:2px;background:#E6E6E6"></div>
<div class="a rss" style="left:131px;top:1705px;background:#DB8B2F"></div>
<svg class="a" style="left:131px;top:1705px" width="52" height="52"><use href="#rss"/></svg>
<div class="a rss" style="left:191px;top:1705px;background:#3B7BD3"></div>
<svg class="a" style="left:191px;top:1705px" width="52" height="52"><use href="#rss"/></svg>
<div class="a nm" style="top:1716px">Litoral gaditano - Costa</div>
<div class="a" style="left:861px;top:1703px;width:60px;height:60px;border:5.5px solid #EAB850;background:#fff"></div>
<svg class="a" style="left:861px;top:1703px" width="60" height="60"><use href="#wave"/></svg>
<div class="a cell" style="left:922.0px;top:1702px;background:#EBB84E"></div>
<div class="a cell" style="left:970.5px;top:1702px;background:#EBB84E"></div>
<div class="a cell" style="left:1019.0px;top:1702px;background:#EBB84E"></div>
<div class="a cell" style="left:1067.5px;top:1702px;background:#EBB84E"></div>
<div class="a cell" style="left:1116.0px;top:1702px;background:#EBB84E"></div>
<div class="a cell" style="left:1164.5px;top:1702px;background:#EBB84E"></div>
<div class="a cell" style="left:1213.0px;top:1702px;background:#EBB84E"></div>
<div class="a cell" style="left:1261.5px;top:1702px;background:#EBB84E"></div>
<div class="a cell" style="left:1310.0px;top:1702px;background:#EBB84E"></div>
<div class="a cell" style="left:1358.5px;top:1702px;background:#EBB84E"></div>
<div class="a cell" style="left:1407.0px;top:1702px;background:#EBB84E"></div>
<div class="a cell" style="left:1455.5px;top:1702px;background:#EBB84E"></div>
<div class="a cell" style="left:1504.0px;top:1702px;background:#EBB84E"></div>
<div class="a cell" style="left:1552.5px;top:1702px;background:#EBB84E"></div>
<div class="a cell" style="left:1601.0px;top:1702px;background:#EBB84E"></div>
<div class="a cell" style="left:1649.5px;top:1702px;background:#EBB84E"></div>
<div class="a cell" style="left:1698.0px;top:1702px;background:#F0E45A"></div>
<div class="a cell" style="left:1746.5px;top:1702px;background:#F0E45A"></div>
<div class="a cell" style="left:1795.0px;top:1702px;background:#F0E45A"></div>
<div class="a cell" style="left:1843.5px;top:1702px;background:#F0E45A"></div>
<div class="a cell" style="left:1892.0px;top:1702px;background:#F0E45A"></div>
<div class="a cell" style="left:1940.5px;top:1702px;background:#F0E45A"></div>
<div class="a cell" style="left:1989.0px;top:1702px;background:#F0E45A"></div>
<div class="a cell" style="left:2037.5px;top:1702px;background:#F0E45A"></div>
<div class="a" style="left:127px;top:1762px;width:674px;height:2px;background:#E6E6E6"></div>
<div class="a" style="left:2084px;top:1762px;width:29px;height:2px;background:#E6E6E6"></div>
<div class="a rss" style="left:131px;top:1767px;background:#DB8B2F"></div>
<svg class="a" style="left:131px;top:1767px" width="52" height="52"><use href="#rss"/></svg>
<div class="a rss" style="left:191px;top:1767px;background:#3B7BD3"></div>
<svg class="a" style="left:191px;top:1767px" width="52" height="52"><use href="#rss"/></svg>
<div class="a nm" style="top:1778px">Estrecho</div>
<div class="a" style="left:801px;top:1765px;width:60px;height:60px;border:5.5px solid #EAB850;background:#fff"></div>
<svg class="a" style="left:801px;top:1765px" width="60" height="60"><use href="#rain"/></svg>
<div class="a" style="left:861px;top:1765px;width:60px;height:60px;border:5.5px solid #EAB850;background:#fff"></div>
<svg class="a" style="left:861px;top:1765px" width="60" height="60"><use href="#wind"/></svg>
<div class="a cell" style="left:922.0px;top:1764px;background:#EBB84E"></div>
<div class="a cell" style="left:970.5px;top:1764px;background:#EBB84E"></div>
<div class="a cell" style="left:1019.0px;top:1764px;background:#EBB84E"></div>
<div class="a cell" style="left:1067.5px;top:1764px;background:#EBB84E"></div>
<div class="a cell" style="left:1116.0px;top:1764px;background:#EBB84E"></div>
<div class="a cell" style="left:1164.5px;top:1764px;background:#EBB84E"></div>
<div class="a cell" style="left:1213.0px;top:1764px;background:#EBB84E"></div>
<div class="a cell" style="left:1261.5px;top:1764px;background:#EBB84E"></div>
<div class="a cell" style="left:1310.0px;top:1764px;background:#EBB84E"></div>
<div class="a cell" style="left:1358.5px;top:1764px;background:#EBB84E"></div>
<div class="a cell" style="left:1407.0px;top:1764px;background:#EBB84E"></div>
<div class="a cell" style="left:1455.5px;top:1764px;background:#EBB84E"></div>
<div class="a cell" style="left:1504.0px;top:1764px;background:#EBB84E"></div>
<div class="a cell" style="left:1552.5px;top:1764px;background:#EBB84E"></div>
<div class="a cell" style="left:1601.0px;top:1764px;background:#EBB84E"></div>
<div class="a cell" style="left:1649.5px;top:1764px;background:#EBB84E"></div>
<div class="a cell" style="left:1698.0px;top:1764px;background:#EBB84E"></div>
<div class="a cell" style="left:1746.5px;top:1764px;background:#EBB84E"></div>
<div class="a cell" style="left:1795.0px;top:1764px;background:#EBB84E"></div>
<div class="a cell" style="left:1843.5px;top:1764px;background:#EBB84E"></div>
<div class="a cell" style="left:1892.0px;top:1764px;background:#EBB84E"></div>
<div class="a cell" style="left:1940.5px;top:1764px;background:#EBB84E"></div>
<div class="a cell" style="left:1989.0px;top:1764px;background:#EBB84E"></div>
<div class="a cell" style="left:2037.5px;top:1764px;background:#EBB84E"></div>
<div class="a" style="left:127px;top:1824px;width:674px;height:2px;background:#E6E6E6"></div>
<div class="a" style="left:2084px;top:1824px;width:29px;height:2px;background:#E6E6E6"></div>
<div class="a rss" style="left:131px;top:1829px;background:#DB8B2F"></div>
<svg class="a" style="left:131px;top:1829px" width="52" height="52"><use href="#rss"/></svg>
<div class="a rss" style="left:191px;top:1829px;background:#3B7BD3"></div>
<svg class="a" style="left:191px;top:1829px" width="52" height="52"><use href="#rss"/></svg>
<div class="a nm" style="top:1840px">Estrecho - Costa</div>
<div class="a" style="left:861px;top:1827px;width:60px;height:60px;border:5.5px solid #EAB850;background:#fff"></div>
<svg class="a" style="left:861px;top:1827px" width="60" height="60"><use href="#wave"/></svg>
<div class="a cell" style="left:922.0px;top:1826px;background:#EBB84E"></div>
<div class="a cell" style="left:970.5px;top:1826px;background:#EBB84E"></div>
<div class="a cell" style="left:1019.0px;top:1826px;background:#EBB84E"></div>
<div class="a cell" style="left:1067.5px;top:1826px;background:#EBB84E"></div>
<div class="a cell" style="left:1116.0px;top:1826px;background:#EBB84E"></div>
<div class="a cell" style="left:1164.5px;top:1826px;background:#EBB84E"></div>
<div class="a cell" style="left:1213.0px;top:1826px;background:#EBB84E"></div>
<div class="a cell" style="left:1261.5px;top:1826px;background:#EBB84E"></div>
<div class="a cell" style="left:1310.0px;top:1826px;background:#EBB84E"></div>
<div class="a cell" style="left:1358.5px;top:1826px;background:#EBB84E"></div>
<div class="a cell" style="left:1407.0px;top:1826px;background:#EBB84E"></div>
<div class="a cell" style="left:1455.5px;top:1826px;background:#EBB84E"></div>
<div class="a cell" style="left:1504.0px;top:1826px;background:#EBB84E"></div>
<div class="a cell" style="left:1552.5px;top:1826px;background:#EBB84E"></div>
<div class="a cell" style="left:1601.0px;top:1826px;background:#EBB84E"></div>
<div class="a cell" style="left:1649.5px;top:1826px;background:#EBB84E"></div>
<div class="a cell" style="left:1698.0px;top:1826px;background:#EBB84E"></div>
<div class="a cell" style="left:1746.5px;top:1826px;background:#EBB84E"></div>
<div class="a cell" style="left:1795.0px;top:1826px;background:#EBB84E"></div>
<div class="a cell" style="left:1843.5px;top:1826px;background:#EBB84E"></div>
<div class="a cell" style="left:1892.0px;top:1826px;background:#EBB84E"></div>
<div class="a cell" style="left:1940.5px;top:1826px;background:#EBB84E"></div>
<div class="a cell" style="left:1989.0px;top:1826px;background:#EBB84E"></div>
<div class="a cell" style="left:2037.5px;top:1826px;background:#EBB84E"></div>
<div class="a hl" style="left:935.0px">00</div>
<div class="a hl" style="left:983.5px">01</div>
<div class="a hl" style="left:1032.0px">02</div>
<div class="a hl" style="left:1080.5px">03</div>
<div class="a hl" style="left:1129.0px">04</div>
<div class="a hl" style="left:1177.5px">05</div>
<div class="a hl" style="left:1226.0px">06</div>
<div class="a hl" style="left:1274.5px">07</div>
<div class="a hl" style="left:1323.0px">08</div>
<div class="a hl" style="left:1371.5px">09</div>
<div class="a hl" style="left:1420.0px">10</div>
<div class="a hl" style="left:1468.5px">11</div>
<div class="a hl" style="left:1517.0px">12</div>
<div class="a hl" style="left:1565.5px">13</div>
<div class="a hl" style="left:1614.0px">14</div>
<div class="a hl" style="left:1662.5px">15</div>
<div class="a hl" style="left:1711.0px">16</div>
<div class="a hl" style="left:1759.5px">17</div>
<div class="a hl" style="left:1808.0px">18</div>
<div class="a hl" style="left:1856.5px">19</div>
<div class="a hl" style="left:1905.0px">20</div>
<div class="a hl" style="left:1953.5px">21</div>
<div class="a hl" style="left:2002.0px">22</div>
<div class="a hl" style="left:2050.5px">23</div>
<div class="a" style="left:127px;top:1887px;width:794px;height:61px;background:#2A4B8D"></div>
<div class="a" style="left:141px;top:1909px;font-size:26.5px;color:#fff">miércoles 4</div>
<div class="a" style="left:127px;top:1946.5px;width:794px;height:1.5px;background:#4A78C8"></div>
</body></html>
